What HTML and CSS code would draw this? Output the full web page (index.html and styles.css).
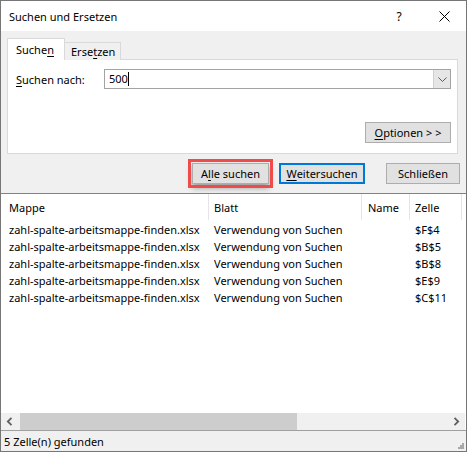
FILE: index.html
```html
<!DOCTYPE html>
<html lang="de">
<head>
<meta charset="utf-8">
<title>Suchen und Ersetzen</title>
<link rel="stylesheet" href="styles.css">
</head>
<body>
<div class="win">
  <div class="titlebar">
    <span class="title">Suchen und Ersetzen</span>
    <span class="help">?</span>
    <span class="close"><svg width="11" height="11" viewBox="0 0 11 11"><path d="M0.5 0.5 L10.5 10.5 M10.5 0.5 L0.5 10.5" stroke="#000" stroke-width="1" fill="none"/></svg></span>
  </div>
  <div class="body">
    <div class="tabs">
      <div class="tab active">Suche<u>n</u></div>
      <div class="tab">Erse<u>t</u>zen</div>
    </div>
    <div class="panel">
      <div class="findrow">
        <span class="label"><u>S</u>uchen nach:</span>
        <div class="combo">
          <span class="val">500</span><span class="caret"></span>
          <span class="drop"><svg width="9" height="5" viewBox="0 0 9 5"><path d="M0.5 0.5 L4.5 4.5 L8.5 0.5" stroke="#5a5a5a" stroke-width="1" fill="none"/></svg></span>
        </div>
      </div>
      <div class="optrow"><button class="btn opt"><u>O</u>ptionen &gt; &gt;</button></div>
    </div>
    <div class="actions">
      <button class="btn alle">A<u>l</u>le suchen</button>
      <button class="btn weiter"><u>W</u>eitersuchen</button>
      <button class="btn schl">Schließen</button>
    </div>
  </div>
  <div class="list">
    <div class="grid head">
      <span class="c1">Mappe</span><span class="c2">Blatt</span><span class="c3">Name</span><span class="c4">Zelle</span><span class="c5"></span>
    </div>
    <div class="grid row"><span class="c1">zahl-spalte-arbeitsmappe-finden.xlsx</span><span class="c2">Verwendung von Suchen</span><span class="c3"></span><span class="c4">$F$4</span><span class="c5"></span></div>
    <div class="grid row"><span class="c1">zahl-spalte-arbeitsmappe-finden.xlsx</span><span class="c2">Verwendung von Suchen</span><span class="c3"></span><span class="c4">$B$5</span><span class="c5"></span></div>
    <div class="grid row"><span class="c1">zahl-spalte-arbeitsmappe-finden.xlsx</span><span class="c2">Verwendung von Suchen</span><span class="c3"></span><span class="c4">$B$8</span><span class="c5"></span></div>
    <div class="grid row"><span class="c1">zahl-spalte-arbeitsmappe-finden.xlsx</span><span class="c2">Verwendung von Suchen</span><span class="c3"></span><span class="c4">$E$9</span><span class="c5"></span></div>
    <div class="grid row"><span class="c1">zahl-spalte-arbeitsmappe-finden.xlsx</span><span class="c2">Verwendung von Suchen</span><span class="c3"></span><span class="c4">$C$11</span><span class="c5"></span></div>
    <div class="spacer"></div>
    <div class="hscroll">
      <span class="arrow"><svg width="7" height="9" viewBox="0 0 7 9"><path d="M5.5 0.8 L1.8 4.5 L5.5 8.2" stroke="#606060" stroke-width="1.8" fill="none"/></svg></span>
      <div class="track"><div class="thumb"></div></div>
      <span class="arrow"><svg width="7" height="9" viewBox="0 0 7 9"><path d="M1.5 0.8 L5.2 4.5 L1.5 8.2" stroke="#606060" stroke-width="1.8" fill="none"/></svg></span>
    </div>
  </div>
  <div class="status">
    <span>5 Zelle(n) gefunden</span>
    <span class="grip"><svg width="6" height="6" viewBox="0 0 6 6"><g fill="#a8a8a8"><rect x="4" y="0" width="2" height="2"/><rect x="2" y="2" width="2" height="2"/><rect x="4" y="2" width="2" height="2"/><rect x="0" y="4" width="2" height="2"/><rect x="2" y="4" width="2" height="2"/><rect x="4" y="4" width="2" height="2"/></g></svg></span>
  </div>
</div>
</body>
</html>
```

FILE: styles.css
```css
* { box-sizing: border-box; }
html, body { margin: 0; padding: 0; background: #fff; }
body { font-family: "Noto Sans", "Open Sans", sans-serif; font-size: 11px; color: #000; }
u { text-decoration: underline; text-underline-offset: 2px; }

.win {
  width: 467px; height: 452px;
  border: 1px solid #767676;
  display: flex; flex-direction: column;
  background: #f0f0f0;
}

.titlebar {
  height: 30px; background: #fff;
  display: flex; align-items: center;
  padding-left: 8px;
}
.title { flex: 1; font-size: 11px; }
.help { width: 12px; font-size: 12px; margin-right: 34px; text-align: center; }
.close { width: 11px; height: 11px; margin-right: 16px; display: flex; }

.body { padding-top: 7px; }
.tabs { display: flex; height: 22px; margin-bottom: -1px; padding-left: 6px; position: relative; z-index: 1; align-items: flex-end; }
.tab {
  height: 18px; width: 57px;
  border: 1px solid #d9d9d9; border-bottom: none;
  background: #f0f0f0;
  padding-left: 6px; line-height: 17px;
}
.tab.active {
  height: 22px; background: #fff;
  padding-left: 8px; line-height: 22px;
  width: 58px; margin-right: -1px;
}
.tab + .tab { width: 57px; }

.panel {
  margin-left: 6px; width: 451px; height: 95px;
  background: #fff; border: 1px solid #d9d9d9;
  padding: 9px 6px 0 8px;
}
.findrow { display: flex; height: 20px; align-items: center; }
.label { width: 88px; }
.combo {
  width: 347px; height: 20px;
  border: 1px solid #a3a3a3;
  display: flex; align-items: center;
  padding-left: 4px;
}
.val { line-height: 18px; }
.caret { width: 1px; height: 14px; background: #000; margin-left: 0; }
.drop {
  margin-left: auto; width: 17px; height: 18px;
  background: #e6e6e6; border-left: 1px solid #cfcfcf;
  display: flex; align-items: center; justify-content: center;
}
.optrow { display: flex; justify-content: flex-end; margin-top: 33px; }

.btn {
  font-family: inherit; font-size: 11px; color: #000;
  height: 21px; background: #e1e1e1;
  border: 1px solid #adadad; padding: 0;
  display: flex; align-items: center; justify-content: center;
}
.opt { width: 86px; }

.actions {
  height: 39px; display: flex; justify-content: flex-end;
  padding: 9px 6px 0 0;
}
.alle {
  width: 77px;
  outline: 3px solid #ee4b4b; outline-offset: 1px;
  box-shadow: 0 4px 6px rgba(0,0,0,0.35);
}
.weiter { width: 86px; margin-left: 10px; border: 2px solid #0078d7; }
.schl { width: 74px; margin-left: 21px; }

.list {
  height: 237px; background: #fff;
  border-top: 1px solid #828282;
  display: flex; flex-direction: column;
}
.grid { display: grid; grid-template-columns: 208px 153px 48px 52px 1fr; }
.grid span { white-space: nowrap; overflow: hidden; }
.head { height: 27px; }
.head span { line-height: 27px; border-right: 1px solid #e5e5e5; height: 26px; }
.head .c5 { border-right: none; }
.row { height: 17px; }
.row span { line-height: 17px; }
.c1 { padding-left: 8px; }
.c2 { padding-left: 5px; }
.c3 { padding-left: 6px; }
.c4 { padding-left: 5px; }
.spacer { flex: 1; }

.hscroll {
  height: 17px; display: flex; background: #f0f0f0;
  margin-right: 1px;
}
.arrow { width: 17px; display: flex; align-items: center; justify-content: center; }
.track { flex: 1; padding: 0 2px; display: flex; }
.thumb { width: 277px; background: #cdcdcd; }

.status {
  height: 21px; border-top: 1px solid #a0a0a0;
  display: flex; align-items: center;
  padding-left: 3px; position: relative;
}
.status span:first-child { flex: 1; }
.grip { display: flex; align-self: flex-end; margin: 0 2px 2px 0; }
```
